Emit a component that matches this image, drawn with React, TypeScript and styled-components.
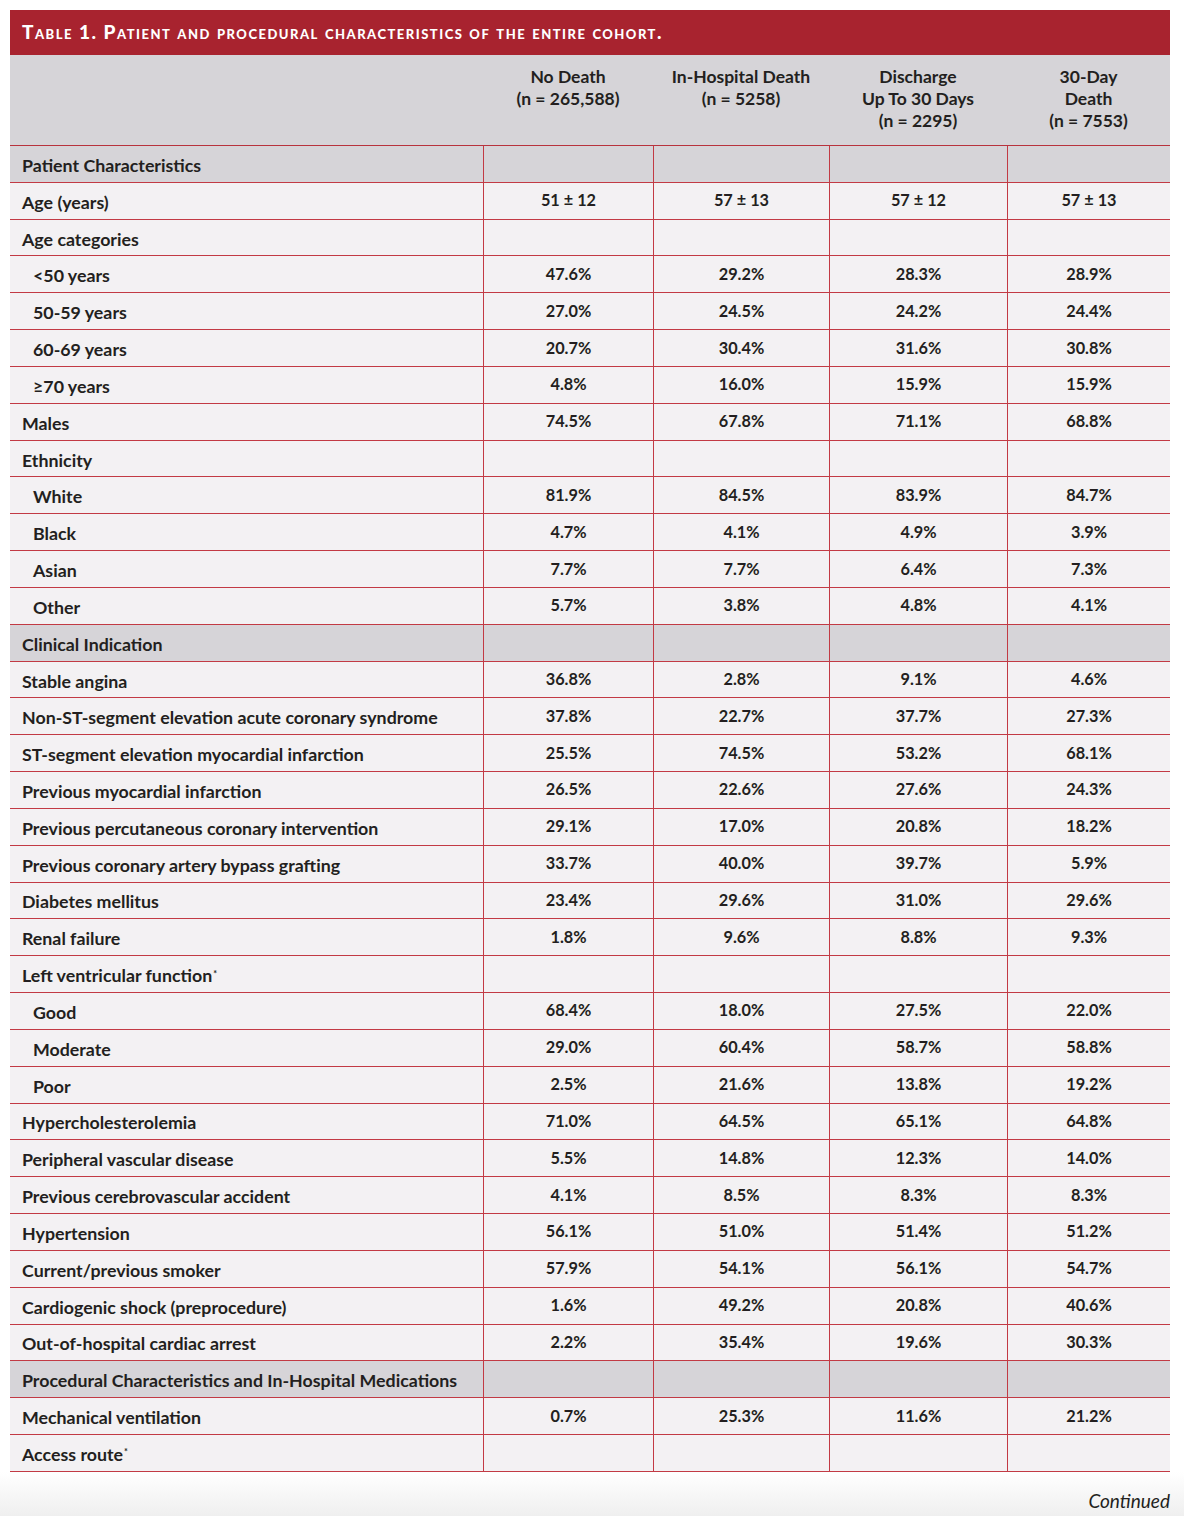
import React from 'react'
import styled, { createGlobalStyle } from 'styled-components'

const GlobalStyle = createGlobalStyle`
  html, body {
    margin: 0;
    padding: 0;
    background: #ffffff;
  }
  body {
    font-family: Lato, "Open Sans", "Liberation Sans", sans-serif;
    color: #231f20;
  }
`

const Page = styled.div`
  width: 1184px;
  min-height: 1516px;
  padding: 10px 14px 0 10px;
  box-sizing: border-box;
  display: flex;
  flex-direction: column;
`

const TitleBar = styled.div`
  height: 45px;
  background: #a8232f;
  color: #ffffff;
  display: flex;
  align-items: center;
  padding-left: 12px;
  padding-bottom: 3px;
  box-sizing: border-box;
  font-weight: 900;
  font-size: 19px;
  font-variant: small-caps;
  letter-spacing: 1.5px;
`

const Grid = styled.div`
  display: grid;
  grid-template-columns: 473px 170px 176px 178px 163px;
`

const HeadCell = styled.div`
  height: 91px;
  box-sizing: border-box;
  background: #d6d4d8;
  border-bottom: 1px solid #b8333d;
  padding-top: 11px;
  text-align: center;
  font-weight: 700;
  font-size: 17.5px;
  line-height: 22px;
`

const Cell = styled.div<{ $section?: boolean; $label?: boolean; $indent?: boolean }>`
  height: 36.83px;
  box-sizing: border-box;
  background: ${(p) => (p.$section ? '#d6d4d8' : '#f3f1f3')};
  border-bottom: 1px solid #c23a44;
  border-left: ${(p) => (p.$label ? 'none' : '1px solid #c23a44')};
  display: flex;
  align-items: center;
  justify-content: ${(p) => (p.$label ? 'flex-start' : 'center')};
  padding-left: ${(p) => (p.$label ? (p.$indent ? '23px' : '12px') : '0')};
  padding-bottom: ${(p) => (p.$label ? '0' : '2px')};
  padding-top: ${(p) => (p.$label ? '2px' : '0')};
  font-weight: 700;
  font-size: ${(p) => (p.$label ? '17.8px' : '16.3px')};
  white-space: nowrap;
`

const Star = styled.sup`
  font-size: 9px;
  vertical-align: top;
  position: relative;
  top: -2px;
  margin-left: 1px;
`

const Footer = styled.div`
  flex: 1;
  margin: 0 -14px 0 -10px;
  padding: 0 14px 0 10px;
  display: flex;
  justify-content: flex-end;
  align-items: flex-end;
  padding-bottom: 4px;
  background: linear-gradient(#ffffff, #efefef);
  font-style: italic;
  font-size: 19px;
  color: #231f20;
`

type Row = {
  label: string
  values?: string[]
  section?: boolean
  indent?: boolean
  star?: boolean
}

const rows: Row[] = [
  { label: 'Patient Characteristics', section: true },
  { label: 'Age (years)', values: ['51 ± 12', '57 ± 13', '57 ± 12', '57 ± 13'] },
  { label: 'Age categories' },
  { label: '<50 years', indent: true, values: ['47.6%', '29.2%', '28.3%', '28.9%'] },
  { label: '50-59 years', indent: true, values: ['27.0%', '24.5%', '24.2%', '24.4%'] },
  { label: '60-69 years', indent: true, values: ['20.7%', '30.4%', '31.6%', '30.8%'] },
  { label: '≥70 years', indent: true, values: ['4.8%', '16.0%', '15.9%', '15.9%'] },
  { label: 'Males', values: ['74.5%', '67.8%', '71.1%', '68.8%'] },
  { label: 'Ethnicity' },
  { label: 'White', indent: true, values: ['81.9%', '84.5%', '83.9%', '84.7%'] },
  { label: 'Black', indent: true, values: ['4.7%', '4.1%', '4.9%', '3.9%'] },
  { label: 'Asian', indent: true, values: ['7.7%', '7.7%', '6.4%', '7.3%'] },
  { label: 'Other', indent: true, values: ['5.7%', '3.8%', '4.8%', '4.1%'] },
  { label: 'Clinical Indication', section: true },
  { label: 'Stable angina', values: ['36.8%', '2.8%', '9.1%', '4.6%'] },
  { label: 'Non-ST-segment elevation acute coronary syndrome', values: ['37.8%', '22.7%', '37.7%', '27.3%'] },
  { label: 'ST-segment elevation myocardial infarction', values: ['25.5%', '74.5%', '53.2%', '68.1%'] },
  { label: 'Previous myocardial infarction', values: ['26.5%', '22.6%', '27.6%', '24.3%'] },
  { label: 'Previous percutaneous coronary intervention', values: ['29.1%', '17.0%', '20.8%', '18.2%'] },
  { label: 'Previous coronary artery bypass grafting', values: ['33.7%', '40.0%', '39.7%', '5.9%'] },
  { label: 'Diabetes mellitus', values: ['23.4%', '29.6%', '31.0%', '29.6%'] },
  { label: 'Renal failure', values: ['1.8%', '9.6%', '8.8%', '9.3%'] },
  { label: 'Left ventricular function', star: true },
  { label: 'Good', indent: true, values: ['68.4%', '18.0%', '27.5%', '22.0%'] },
  { label: 'Moderate', indent: true, values: ['29.0%', '60.4%', '58.7%', '58.8%'] },
  { label: 'Poor', indent: true, values: ['2.5%', '21.6%', '13.8%', '19.2%'] },
  { label: 'Hypercholesterolemia', values: ['71.0%', '64.5%', '65.1%', '64.8%'] },
  { label: 'Peripheral vascular disease', values: ['5.5%', '14.8%', '12.3%', '14.0%'] },
  { label: 'Previous cerebrovascular accident', values: ['4.1%', '8.5%', '8.3%', '8.3%'] },
  { label: 'Hypertension', values: ['56.1%', '51.0%', '51.4%', '51.2%'] },
  { label: 'Current/previous smoker', values: ['57.9%', '54.1%', '56.1%', '54.7%'] },
  { label: 'Cardiogenic shock (preprocedure)', values: ['1.6%', '49.2%', '20.8%', '40.6%'] },
  { label: 'Out-of-hospital cardiac arrest', values: ['2.2%', '35.4%', '19.6%', '30.3%'] },
  { label: 'Procedural Characteristics and In-Hospital Medications', section: true },
  { label: 'Mechanical ventilation', values: ['0.7%', '25.3%', '11.6%', '21.2%'] },
  { label: 'Access route', star: true },
]

const headers = [
  ['No Death', '(n = 265,588)'],
  ['In-Hospital Death', '(n = 5258)'],
  ['Discharge', 'Up To 30 Days', '(n = 2295)'],
  ['30-Day', 'Death', '(n = 7553)'],
]

const App: React.FC = () => {
  return (
    <Page>
      <GlobalStyle />
      <TitleBar>Table 1. Patient and procedural characteristics of the entire cohort.</TitleBar>
      <Grid>
        <HeadCell />
        {headers.map((lines, i) => (
          <HeadCell key={i}>
            {lines.map((l) => (
              <div key={l}>{l}</div>
            ))}
          </HeadCell>
        ))}
        {rows.map((row) => (
          <React.Fragment key={row.label}>
            <Cell $label $section={row.section} $indent={row.indent}>
              {row.label}
              {row.star && <Star>*</Star>}
            </Cell>
            {[0, 1, 2, 3].map((i) => (
              <Cell key={i} $section={row.section}>
                {row.values ? row.values[i] : ''}
              </Cell>
            ))}
          </React.Fragment>
        ))}
      </Grid>
      <Footer>Continued</Footer>
    </Page>
  )
}

export default App
